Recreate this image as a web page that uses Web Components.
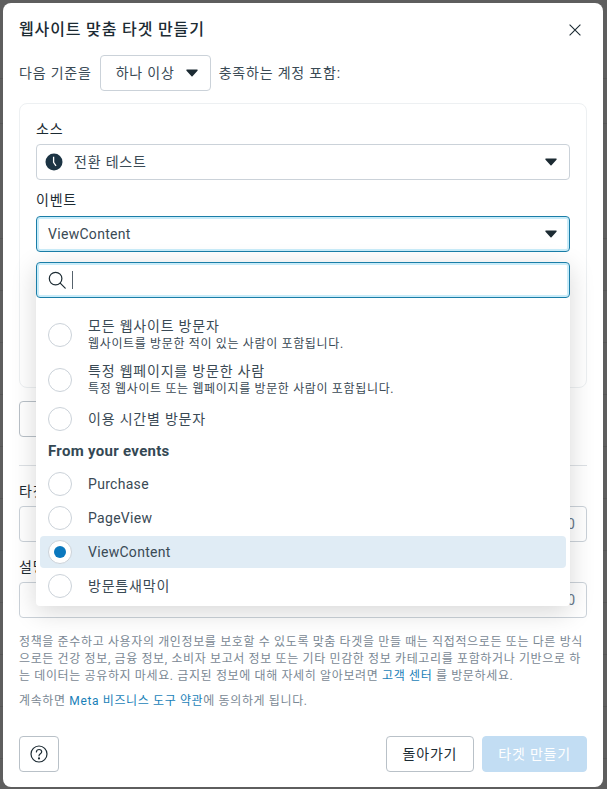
<!DOCTYPE html>
<html lang="ko">
<head>
<meta charset="utf-8">
<title>웹사이트 맞춤 타겟 만들기</title>
<style>
  html, body { margin: 0; height: 100%; }
  body {
    position: relative;
    background-color: #5e5e5e;
    background-image:
      linear-gradient(#565656, #565656),
      linear-gradient(#565656, #565656),
      repeating-linear-gradient(to bottom, #565656 0, #565656 1px, transparent 1px, transparent 52px);
    background-repeat: no-repeat;
    background-size: 100% 1px, 100% 1px, 100% 100%;
    background-position: 0 78px, 0 123px, 0 238px;
    color: #3a4a55;
    font: 14px/20px Roboto, "Noto Sans CJK KR", sans-serif;
    letter-spacing: .8px;
    overflow: hidden;
  }
  a { color: #1a7fb8; text-decoration: none; }
  .latin { letter-spacing: .3px; }
</style>
</head>
<body>

<template id="dialog-tpl">
  <style>
    :host {
      display: flex;
      flex-direction: column;
      box-sizing: border-box;
      position: relative;
      width: 600px;
      height: 784px;
      margin: 3px 0 0 3px;
      padding: 15px 16px 15px;
      background: #fff;
      border-radius: 8px;
    }
    header { display: flex; align-items: center; justify-content: space-between; height: 24px; }
    h1 { margin: 0; font-size: 16px; line-height: 24px; font-weight: 500; letter-spacing: .85px; color: #1c2b33; }
    button { all: unset; display: flex; width: 24px; height: 24px; align-items: center; justify-content: center; }
    main { display: flex; flex-direction: column; flex: 1; }
    footer { display: flex; align-items: center; gap: 8px; }
    .spacer { flex: 1; }
  </style>
  <header>
    <h1><slot name="title"></slot></h1>
    <button aria-label="닫기">
      <svg width="12" height="12" viewBox="0 0 12 12" fill="none" stroke="#1c2b33" stroke-width="1.1"><path d="M.6.6l10.8 10.8M11.4.6L.6 11.4"/></svg>
    </button>
  </header>
  <main><slot></slot></main>
  <footer>
    <slot name="help"></slot>
    <span class="spacer"></span>
    <slot name="actions"></slot>
  </footer>
</template>

<template id="select-tpl">
  <style>
    :host { display: block; position: relative; }
    :host([inline]) { display: inline-block; }
    .box {
      display: flex;
      align-items: center;
      box-sizing: border-box;
      height: 36px;
      padding: 0 12px 0 11px;
      background: #fff;
      border: 1px solid #cbd2d9;
      border-radius: 4px;
    }
    :host([inline]) .box { padding: 0 12px 0 15px; gap: 11px; }
    :host([focused]) .box { border-color: #1a7ea8; box-shadow: inset 0 0 0 2px #c9ecf9; }
    .value { flex: 1; white-space: nowrap; }
    svg { flex: none; }
    .drop { position: absolute; left: 0; right: 0; top: calc(100% + 10px); z-index: 5; }
  </style>
  <div class="box">
    <slot name="icon"></slot>
    <span class="value"><slot name="value"></slot></span>
    <svg width="12" height="8" viewBox="0 0 12 8"><path d="M1 .6h10c.6 0 .9.7.5 1.1L6.5 7.2c-.3.3-.7.3-1 0L.5 1.7C.1 1.3.4.6 1 .6z" fill="#1c2b33"/></svg>
  </div>
  <div class="drop"><slot></slot></div>
</template>

<template id="menu-tpl">
  <style>
    :host {
      display: block;
      background: #fff;
      border-radius: 4px;
      box-shadow: 0 6px 26px rgba(0, 0, 0, .16);
    }
    .search {
      display: flex;
      align-items: center;
      gap: 6px;
      box-sizing: border-box;
      height: 36px;
      padding: 0 11px;
      border: 1px solid #1a7ea8;
      border-radius: 4px;
      box-shadow: inset 0 0 0 2px #c9ecf9;
    }
    .caret { width: 1px; height: 18px; background: #56626c; }
    .list { display: flex; flex-direction: column; padding: 14px 4px 3px; }
    .heading { font-size: 15px; font-weight: 700; line-height: 31px; padding-left: 8px; color: #344854; letter-spacing: .3px; }
  </style>
  <div class="search">
    <svg width="18" height="18" viewBox="0 0 18 18" fill="none" stroke="#1c2b33" stroke-width="1.2"><circle cx="7.6" cy="7.6" r="6.3"/><path d="M12.2 12.2l5 5" stroke-linecap="round"/></svg>
    <span class="caret"></span>
  </div>
  <div class="list">
    <m-option label="모든 웹사이트 방문자" hint="웹사이트를 방문한 적이 있는 사람이 포함됩니다."></m-option>
    <m-option label="특정 웹페이지를 방문한 사람" hint="특정 웹사이트 또는 웹페이지를 방문한 사람이 포함됩니다."></m-option>
    <m-option label="이용 시간별 방문자"></m-option>
    <div class="heading">From your events</div>
    <m-option latin label="Purchase"></m-option>
    <m-option latin label="PageView"></m-option>
    <m-option latin label="ViewContent" selected></m-option>
    <m-option label="방문틈새막이"></m-option>
  </div>
</template>

<template id="option-tpl">
  <style>
    :host {
      display: flex;
      align-items: center;
      gap: 16px;
      min-height: 34px;
      padding: 0 8px;
      border-radius: 4px;
      color: #3a4a55;
    }
    :host([latin]) { letter-spacing: .3px; }
    :host([hint]) { min-height: 45px; }
    :host([selected]) { background: #e0ecf5; min-height: 32px; margin: 1px 0; }
    .radio {
      flex: none;
      display: flex;
      align-items: center;
      justify-content: center;
      box-sizing: border-box;
      width: 24px;
      height: 24px;
      background: #fff;
      border: 1px solid #cbd2d9;
      border-radius: 50%;
    }
    :host([selected]) .dot { width: 12px; height: 12px; border-radius: 50%; background: #0a78be; }
    .label { line-height: 18px; }
    :host([hint]) .label { line-height: 19px; }
    .hint { font-size: 12px; line-height: 16px; color: #3a4a55; letter-spacing: .65px; }
    .hint:empty { display: none; }
  </style>
  <span class="radio"><span class="dot"></span></span>
  <span>
    <div class="label"></div>
    <div class="hint"></div>
  </span>
</template>

<template id="button-tpl">
  <style>
    :host {
      display: inline-flex;
      align-items: center;
      justify-content: center;
      box-sizing: border-box;
      height: 36px;
      padding: 0 16px;
      background: #fff;
      border: 1px solid #b9c1c8;
      border-radius: 4px;
      color: #1c2b33;
    }
    :host([primary]) { background: #c2ddf3; border-color: #c2ddf3; color: #fff; padding: 0 15px; }
  </style>
  <slot></slot>
</template>

<template id="field-tpl">
  <style>
    :host { display: block; margin-top: 15px; }
    label { display: block; line-height: 20px; margin-bottom: 5px; color: #1c2b33; }
    .input {
      display: flex;
      align-items: center;
      justify-content: flex-end;
      box-sizing: border-box;
      height: 36px;
      padding: 0 11px;
      border: 1px solid #cbd2d9;
      border-radius: 4px;
      color: #67788a;
      letter-spacing: 0;
    }
  </style>
  <label></label>
  <div class="input"><slot></slot></div>
</template>

<m-dialog>
  <span slot="title">웹사이트 맞춤 타겟 만들기</span>

  <m-criteria>
    <span>다음 기준을</span>
    <m-select inline><span slot="value">하나 이상</span></m-select>
    <span>충족하는 계정 포함:</span>
  </m-criteria>

  <m-card>
    <m-label style="margin-top:-1px">소스</m-label>
    <m-select>
      <svg slot="icon" width="18" height="18" viewBox="0 0 18 18" style="margin:0 11px 0 -3px;display:block"><circle cx="9" cy="9" r="8.5" fill="#1c3444"/><path d="M8.6 3.8v5.6l2.4 3.4" fill="none" stroke="#fff" stroke-width="1.3"/></svg>
      <span slot="value">전환 테스트</span>
    </m-select>
    <m-label style="margin:10px 0 6px">이벤트</m-label>
    <m-select focused>
      <span slot="value" class="latin">ViewContent</span>
      <m-menu></m-menu>
    </m-select>
  </m-card>

  <m-row><m-button style="padding:0 24px">제외</m-button></m-row>
  <m-rule></m-rule>

  <m-field label="타겟 이름">0/50</m-field>
  <m-field label="설명">0/100</m-field>

  <m-policy>
    <p>정책을 준수하고 사용자의 개인정보를 보호할 수 있도록 맞춤 타겟을 만들 때는 직접적으로든 또는 다른 방식으로든 건강 정보, 금융 정보, 소비자 보고서 정보 또는 기타 민감한 정보 카테고리를 포함하거나 기반으로 하는 데이터는 공유하지 마세요. 금지된 정보에 대해 자세히 알아보려면 <a href="#">고객 센터</a> 를 방문하세요.</p>
    <p>계속하면 <a href="#">Meta 비즈니스 도구 약관</a>에 동의하게 됩니다.</p>
  </m-policy>

  <m-button slot="help" aria-label="도움말" style="width:40px;padding:0">
    <svg width="18" height="18" viewBox="0 0 18 18" fill="none" stroke="#1c2b33" stroke-width="1.2" style="display:block"><circle cx="9" cy="9" r="8"/><path d="M6.4 7c0-1.5 1.2-2.5 2.7-2.5s2.6 1 2.6 2.3c0 1.9-2.7 2-2.7 4" stroke-linecap="round"/><circle cx="9" cy="13.4" r=".5" fill="#1c2b33"/></svg>
  </m-button>
  <m-button slot="actions">돌아가기</m-button>
  <m-button slot="actions" primary>타겟 만들기</m-button>
</m-dialog>

<script>
  function stamp(el, id) {
    const tpl = document.getElementById(id);
    const root = el.attachShadow({ mode: 'open' });
    root.appendChild(tpl.content.cloneNode(true));
    return root;
  }

  function fromTemplate(name, id) {
    customElements.define(name, class extends HTMLElement {
      constructor() {
        super();
        stamp(this, id);
      }
    });
  }

  function fromStyle(name, css) {
    customElements.define(name, class extends HTMLElement {
      constructor() {
        super();
        this.attachShadow({ mode: 'open' }).innerHTML = `<style>${css}</style><slot></slot>`;
      }
    });
  }

  class MOption extends HTMLElement {
    constructor() {
      super();
      this.root = stamp(this, 'option-tpl');
    }
    connectedCallback() {
      this.root.querySelector('.label').textContent = this.getAttribute('label');
      this.root.querySelector('.hint').textContent = this.getAttribute('hint') || '';
    }
  }

  class MField extends HTMLElement {
    constructor() {
      super();
      this.root = stamp(this, 'field-tpl');
    }
    connectedCallback() {
      this.root.querySelector('label').textContent = this.getAttribute('label');
    }
  }

  fromTemplate('m-dialog', 'dialog-tpl');
  fromTemplate('m-select', 'select-tpl');
  fromTemplate('m-menu', 'menu-tpl');
  fromTemplate('m-button', 'button-tpl');
  customElements.define('m-option', MOption);
  customElements.define('m-field', MField);

  fromStyle('m-criteria', ':host { display: flex; align-items: center; gap: 8px; margin-top: 13px; }');
  fromStyle('m-card', ':host { display: block; box-sizing: border-box; height: 285px; margin-top: 12px; padding: 16px; border: 1px solid #edf0f2; border-radius: 8px; }');
  fromStyle('m-label', ':host { display: block; line-height: 20px; margin-bottom: 5px; color: #1c2b33; }');
  fromStyle('m-row', ':host { display: flex; margin-top: 13px; }');
  fromStyle('m-rule', ':host { display: block; height: 1px; margin-top: 28px; background: #dde1e5; }');
  fromStyle('m-policy', ':host { display: block; margin-top: 16px; font-size: 12px; line-height: 17px; color: #7a8894; letter-spacing: .63px; word-break: break-all; } ::slotted(p) { margin: 0 0 8px; }');
</script>
</body>
</html>
